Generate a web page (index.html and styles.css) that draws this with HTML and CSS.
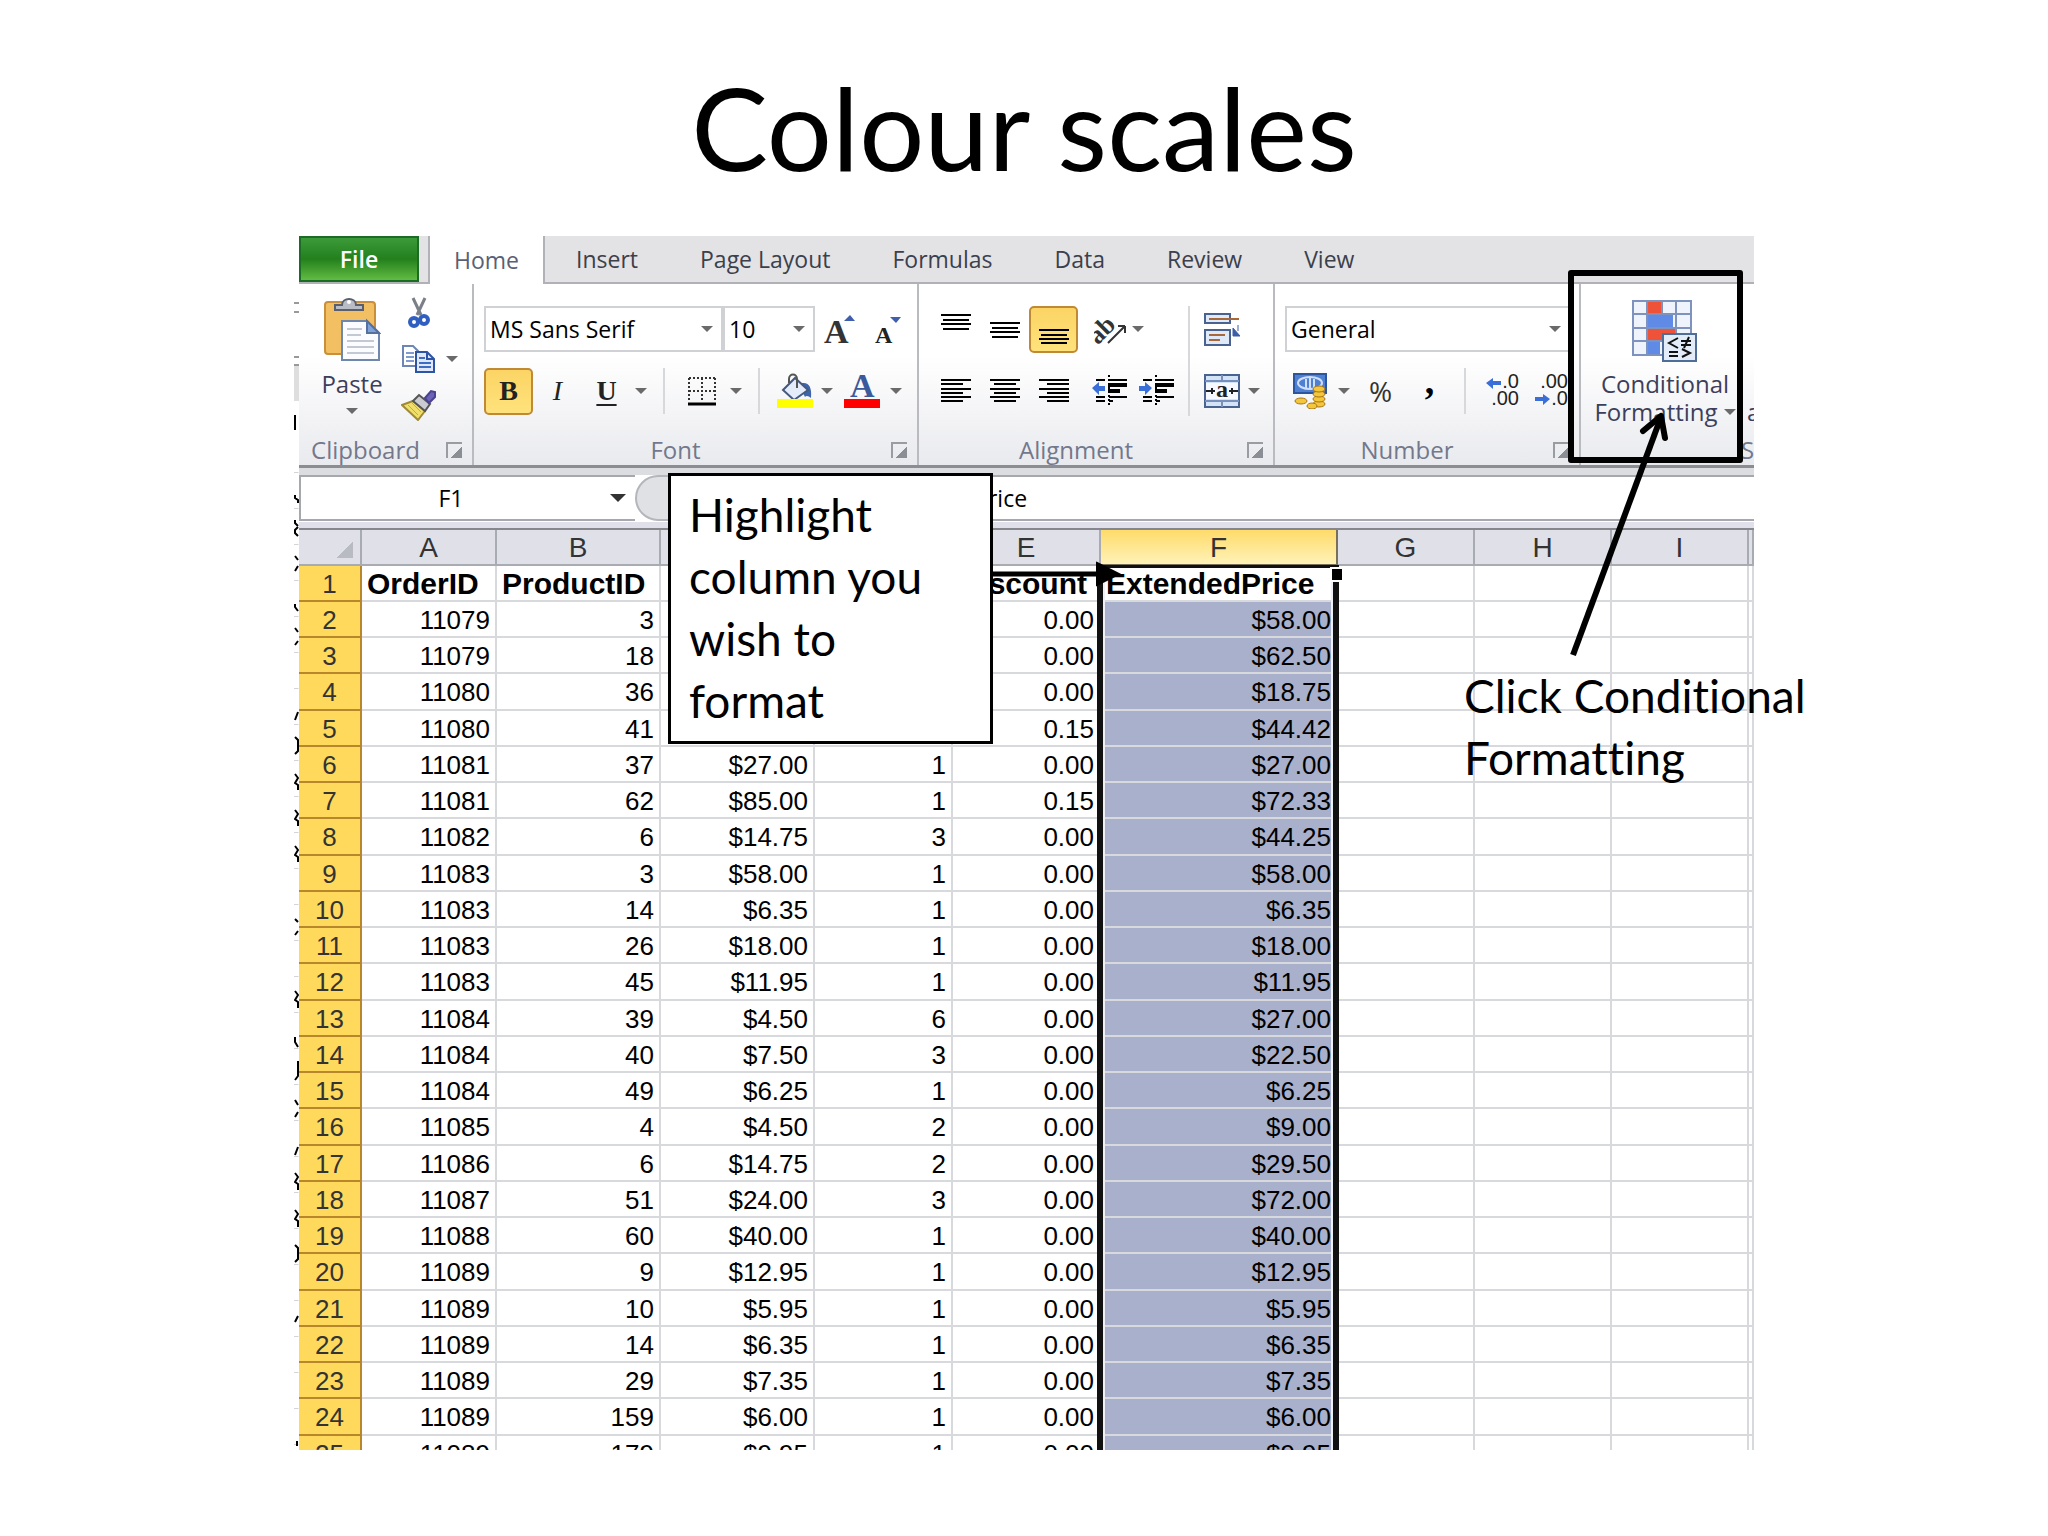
FILE: index.html
```html
<!DOCTYPE html>
<html lang="en">
<head>
    <meta charset="UTF-8">
    <meta name="viewport" content="width=device-width, initial-scale=1.0">
    <title>Colour scales</title>
    <link rel="stylesheet" href="styles.css">
</head>
<body>
    <h1>Colour scales</h1>

    <main class="workbook">
        <!-- sliver of the window behind -->
        <svg class="behind" width="5" height="1214" viewBox="0 0 5 1214">
            <path d="M0 128h5v37H0z" fill="#dedede"/>
            <path d="M0 67h5M0 76h5M0 121h5M0 129h5" stroke="#999" stroke-width="2"/>
            <path d="M2 0v978" transform="translate(0 236)" stroke="#d4d4d4" stroke-width="5" stroke-dasharray="1 35"/>
            <path d="M1 179v15" stroke="#000" stroke-width="2"/>
            <g fill="none" stroke="#000" stroke-width="2">
                <path d="M1 259v3l3 2v3M1 284v3l3 3M4 291l-3 3v3l3 3M1 320l3 4M4 330l-3 5M1 368v3l3 4M1 392l3 4M4 405l-3 4"/>
                <path d="M4 476l-3 8M1 501l3 3v11l-3 3M1 538l3 4-3 5 3 2v5M1 574l3 4-3 5 3 2v5M1 610l3 4-3 5 3 2v5"/>
                <path d="M1 683l3 3M4 695l-3 4M1 755l3 4-3 5 3 2v6M1 801v5l3 5M4 825v15l-3 4"/>
                <path d="M1 864l3 5M4 876l-3 5M4 911l-3 8M1 937l3 4-3 5 3 2v6M1 974l3 4-3 5 3 2v6M1 1009l3 3v11l-3 3M4 1080l-3 6M3 1205v5"/>
            </g>
        </svg>

        <div class="window">
            <nav class="tabs">
                <button class="tab file">File</button>
                <button class="tab home">Home</button>
                <button class="tab">Insert</button>
                <button class="tab">Page Layout</button>
                <button class="tab">Formulas</button>
                <button class="tab">Data</button>
                <button class="tab">Review</button>
                <button class="tab">View</button>
            </nav>

            <div class="ribbon">
                <section class="group clipboard">
                    <div class="group-body">
                        <button class="big paste">
                            <svg width="58" height="66" viewBox="0 0 58 66">
                                <rect x="2" y="6" width="50" height="52" rx="3" fill="#f3bf63" stroke="#c98f3a" stroke-width="2"/>
                                <path d="M12 14V9h7c0-8 14-8 14 0h7v5z" fill="#b9bcc4" stroke="#5a5f6b" stroke-width="2"/>
                                <circle cx="26" cy="6" r="2" fill="#fff"/>
                                <path d="M19 25h25l12 12v27H19z" fill="#fbfcff" stroke="#6f87ad" stroke-width="2"/>
                                <path d="M44 25v12h12z" fill="#7fa3d8" stroke="#54719f" stroke-width="2"/>
                                <path d="M24 33h15M24 39h14M24 45h27M24 51h27M24 57h27" stroke="#c3c8d2" stroke-width="2"/>
                            </svg>
                            <span>Paste</span>
                            <i class="caret"></i>
                        </button>
                        <div class="stack">
                            <button class="tool" aria-label="Cut">
                                <svg width="22" height="32" viewBox="0 0 22 32">
                                    <path d="M5 1l8 17M17 1L9 18" stroke="#7a7f88" stroke-width="3"/>
                                    <circle cx="6" cy="25" r="4" fill="none" stroke="#2f5fc0" stroke-width="4"/>
                                    <circle cx="16" cy="23" r="4" fill="none" stroke="#2f5fc0" stroke-width="4"/>
                                </svg>
                            </button>
                            <div class="split">
                                <button class="tool" aria-label="Copy">
                                    <svg width="34" height="28" viewBox="0 0 34 28">
                                        <path d="M1 1h10l5 5v15H1z" fill="#fff" stroke="#6d86b5" stroke-width="2"/>
                                        <path d="M4 8h8M4 12h8M4 16h8" stroke="#7f9ccf" stroke-width="2"/>
                                        <path d="M14 7h11l7 7v13H14z" fill="#dfe9fb" stroke="#2d54a5" stroke-width="2"/>
                                        <path d="M25 7v7h7" fill="none" stroke="#2d54a5" stroke-width="2"/>
                                        <path d="M17 13h6M17 18h12M17 22h12" stroke="#3e6dc4" stroke-width="2"/>
                                    </svg>
                                </button>
                                <button class="drop" aria-label="Copy options"><i class="caret"></i></button>
                            </div>
                            <button class="tool" aria-label="Format Painter">
                                <svg width="36" height="32" viewBox="0 0 36 32">
                                    <path d="M1 16l11-4 12 10-7 9z" fill="#f1df6b" stroke="#a08a35" stroke-width="2"/>
                                    <path d="M7 16l10 10M11 14l9 9" stroke="#c8ad3c" stroke-width="1"/>
                                    <path d="M12 12l6-6 11 9-5 7z" fill="#c9ccd2" stroke="#555" stroke-width="2"/>
                                    <path d="M24 9l6-7 4 1v5l-6 6z" fill="#6b63b8" stroke="#4a4391" stroke-width="2"/>
                                </svg>
                            </button>
                        </div>
                    </div>
                    <footer><span>Clipboard</span><button class="launcher" aria-label="Clipboard settings"></button></footer>
                </section>

                <section class="group font">
                    <div class="group-body rows">
                        <div class="row">
                            <select class="combo font-name" aria-label="Font"><option>MS Sans Serif</option></select>
                            <select class="combo font-size" aria-label="Font size"><option>10</option></select>
                            <button class="tool" aria-label="Increase font size">
                                <svg width="32" height="32" viewBox="0 0 32 32">
                                    <text x="0" y="30" class="letter big-a">A</text>
                                    <path d="M20 8h11l-5-6z" fill="#3f5fae"/>
                                </svg>
                            </button>
                            <button class="tool" aria-label="Decrease font size">
                                <svg width="32" height="32" viewBox="0 0 32 32">
                                    <text x="2" y="30" class="letter small-a">A</text>
                                    <path d="M17 4h11l-5 6z" fill="#3f5fae"/>
                                </svg>
                            </button>
                        </div>
                        <div class="row">
                            <button class="tool on bold">B</button>
                            <button class="tool italic">I</button>
                            <button class="tool underline">U</button>
                            <button class="drop" aria-label="Underline options"><i class="caret"></i></button>
                            <i class="sep"></i>
                            <button class="tool" aria-label="Borders">
                                <svg width="30" height="30" viewBox="0 0 30 30">
                                    <path d="M2 2h26M2 15h26M2 2v24M15 2v24M28 2v24" fill="none" stroke="#333" stroke-width="2" stroke-dasharray="2 2"/>
                                    <path d="M1 28h28" stroke="#000" stroke-width="3"/>
                                </svg>
                            </button>
                            <button class="drop" aria-label="Border options"><i class="caret"></i></button>
                            <i class="sep"></i>
                            <button class="tool narrow" aria-label="Fill colour">
                                <svg width="36" height="36" viewBox="0 0 36 36">
                                    <path d="M25 10c7-1 10 4 9 15-2-2-5-3-6-1l-4-8z" fill="#3e64ac"/>
                                    <path d="M6 17L18 5l13 12-14 10z" fill="#e4ecfa" stroke="#44597f" stroke-width="2"/>
                                    <path d="M12 10V6c0-6 8-6 8 0v9" fill="none" stroke="#555" stroke-width="2"/>
                                    <path d="M0 26h36v9H0z" fill="#ff0"/>
                                </svg>
                            </button>
                            <button class="drop" aria-label="Fill colour options"><i class="caret"></i></button>
                            <button class="tool" aria-label="Font colour">
                                <svg width="36" height="36" viewBox="0 0 36 36">
                                    <text x="6" y="24" class="letter blue-a">A</text>
                                    <path d="M0 26h36v9H0z" fill="#f00"/>
                                </svg>
                            </button>
                            <button class="drop" aria-label="Font colour options"><i class="caret"></i></button>
                        </div>
                    </div>
                    <footer><span>Font</span><button class="launcher" aria-label="Font settings"></button></footer>
                </section>

                <section class="group alignment">
                    <div class="group-body">
                        <div class="rows">
                            <div class="row">
                                <button class="tool" aria-label="Top align">
                                    <svg width="32" height="32" viewBox="0 0 32 32"><path d="M1 2h30M3 7h26M1 11h30M3 16h26" stroke="#000" stroke-width="2"/></svg>
                                </button>
                                <button class="tool" aria-label="Middle align">
                                    <svg width="32" height="32" viewBox="0 0 32 32"><path d="M1 10h30M3 15h26M1 19h30M3 24h26" stroke="#000" stroke-width="2"/></svg>
                                </button>
                                <button class="tool on" aria-label="Bottom align">
                                    <svg width="32" height="32" viewBox="0 0 32 32"><path d="M1 17h30M3 22h26M1 26h30M3 30h26" stroke="#000" stroke-width="2"/></svg>
                                </button>
                                <button class="tool orientation" aria-label="Orientation">
                                    <svg width="34" height="34" viewBox="0 0 34 34">
                                        <text x="-4" y="25" class="letter ab" transform="rotate(-45 10 20)">ab</text>
                                        <path d="M14 31l17-17M31 14h-7M31 14v7" fill="none" stroke="#333" stroke-width="2"/>
                                    </svg>
                                </button>
                                <button class="drop" aria-label="Orientation options"><i class="caret"></i></button>
                            </div>
                            <div class="row">
                                <button class="tool" aria-label="Align left">
                                    <svg width="32" height="32" viewBox="0 0 32 32"><path d="M1 5h30M1 9h22M1 14h30M1 18h22M1 22h30M1 26h22" stroke="#000" stroke-width="2"/></svg>
                                </button>
                                <button class="tool" aria-label="Centre">
                                    <svg width="32" height="32" viewBox="0 0 32 32"><path d="M1 5h30M5 9h22M1 14h30M5 18h22M1 22h30M5 26h22" stroke="#000" stroke-width="2"/></svg>
                                </button>
                                <button class="tool" aria-label="Align right">
                                    <svg width="32" height="32" viewBox="0 0 32 32"><path d="M1 5h30M9 9h22M1 14h30M9 18h22M1 22h30M9 26h22" stroke="#000" stroke-width="2"/></svg>
                                </button>
                                <div class="split indents">
                                    <button class="tool" aria-label="Decrease indent">
                                        <svg width="36" height="34" viewBox="0 0 36 34">
                                            <path d="M4 6h9M4 23h9M4 27h9M17 6h18M17 23h18M17 27h4" stroke="#000" stroke-width="2"/>
                                            <path d="M16 11h19M16 17h12" stroke="#000" stroke-width="4"/>
                                            <path d="M17 1v32" stroke="#000" stroke-width="2" stroke-dasharray="2 2"/>
                                            <path d="M0 14l7-6v4h6v5H7v4z" fill="#3a6fd8"/>
                                        </svg>
                                    </button>
                                    <button class="tool" aria-label="Increase indent">
                                        <svg width="36" height="34" viewBox="0 0 36 34">
                                            <path d="M4 6h9M4 23h9M4 27h9M17 6h18M17 23h18M17 27h4" stroke="#000" stroke-width="2"/>
                                            <path d="M16 11h19M16 17h12" stroke="#000" stroke-width="4"/>
                                            <path d="M17 1v32" stroke="#000" stroke-width="2" stroke-dasharray="2 2"/>
                                            <path d="M13 14L6 8v4H0v5h6v4z" fill="#3a6fd8"/>
                                        </svg>
                                    </button>
                                </div>
                            </div>
                        </div>
                        <i class="sep tall"></i>
                        <div class="rows">
                            <div class="row">
                                <button class="tool narrow" aria-label="Wrap text">
                                    <svg width="36" height="34" viewBox="0 0 36 34">
                                        <path d="M1 2h25v9H1zM1 18h25v15H1z" fill="#dfe9f8" stroke="#4a628f" stroke-width="2"/>
                                        <path d="M5 7h30M5 23h16M5 28h11" stroke="#a8683a" stroke-width="2"/>
                                        <path d="M34 13v6M29 24v-8l7 8z" fill="#3c5ea8" stroke="#3c5ea8" stroke-width="1"/>
                                    </svg>
                                </button>
                            </div>
                            <div class="row">
                                <button class="tool narrow" aria-label="Merge and centre">
                                    <svg width="36" height="34" viewBox="0 0 36 34">
                                        <path d="M1 1h34v32H1z" fill="#d4e2f6" stroke="#4a628f" stroke-width="2"/>
                                        <path d="M1 7h34M1 27h34M18 1v6M18 27v6" stroke="#7690bb" stroke-width="2"/>
                                        <path d="M2 9h32v16H2z" fill="#f6f9ff"/>
                                        <path d="M2 17h9M8 14v6M34 17h-9M28 14v6" stroke="#222" stroke-width="2"/>
                                        <text x="12" y="23" class="letter merge-a">a</text>
                                    </svg>
                                </button>
                                <button class="drop" aria-label="Merge options"><i class="caret"></i></button>
                            </div>
                        </div>
                    </div>
                    <footer><span>Alignment</span><button class="launcher" aria-label="Alignment settings"></button></footer>
                </section>

                <section class="group number">
                    <div class="group-body rows">
                        <div class="row">
                            <select class="combo number-format" aria-label="Number format"><option>General</option></select>
                        </div>
                        <div class="row">
                            <button class="tool" aria-label="Accounting format">
                                <svg width="34" height="36" viewBox="0 0 34 36">
                                    <path d="M1 1h32v19H1z" fill="#4f7fd0" stroke="#2c559f" stroke-width="2"/>
                                    <ellipse cx="17" cy="10" rx="12" ry="6" fill="none" stroke="#cfdff7" stroke-width="2"/>
                                    <path d="M13 6v9M17 5v10M21 6v9" stroke="#cfdff7" stroke-width="2"/>
                                    <g fill="#f4c63c" stroke="#a87512" stroke-width="1">
                                        <ellipse cx="26" cy="31" rx="6" ry="3"/>
                                        <ellipse cx="26" cy="26" rx="6" ry="3"/>
                                        <ellipse cx="26" cy="21" rx="6" ry="3"/>
                                        <ellipse cx="26" cy="16" rx="6" ry="3"/>
                                        <ellipse cx="8" cy="28" rx="6" ry="3"/>
                                        <ellipse cx="19" cy="33" rx="5" ry="3"/>
                                    </g>
                                </svg>
                            </button>
                            <button class="drop" aria-label="Accounting options"><i class="caret"></i></button>
                            <button class="tool percent">%</button>
                            <button class="tool narrow comma">,</button>
                            <i class="sep"></i>
                            <button class="tool" aria-label="Increase decimal">
                                <svg width="34" height="34" viewBox="0 0 34 34">
                                    <text x="33" y="14" class="dec">.0</text>
                                    <text x="33" y="31" class="dec">.00</text>
                                    <path d="M0 9l7-5v3h8v4H7v4z" fill="#3a6fd8"/>
                                </svg>
                            </button>
                            <button class="tool" aria-label="Decrease decimal">
                                <svg width="34" height="34" viewBox="0 0 34 34">
                                    <text x="33" y="14" class="dec">.00</text>
                                    <text x="33" y="31" class="dec">.0</text>
                                    <path d="M15 25l-7-5v3H0v4h8v4z" fill="#3a6fd8"/>
                                </svg>
                            </button>
                        </div>
                    </div>
                    <footer><span>Number</span><button class="launcher" aria-label="Number settings"></button></footer>
                </section>

                <section class="group styles">
                    <div class="group-body">
                        <button class="big conditional">
                            <svg width="66" height="66" viewBox="0 -4 66 66">
                                <path d="M1 1h58v54H1z" fill="#eef3fc"/>
                                <path d="M16 1h14v13H16zM16 28h27v13H16z" fill="#ee5238"/>
                                <path d="M16 14h25v14H16zM16 41h12v14H16z" fill="#5f8ae6"/>
                                <path d="M1 1h58v54H1zM1 14h58M1 28h58M1 41h58M15 1v54M30 1v13M44 1v54" fill="none" stroke="#7d93bd" stroke-width="2"/>
                                <path d="M31 34h33v27H31z" fill="#e3edf9" stroke="#4f6d99" stroke-width="2"/>
                                <path d="M46 38l-9 5 9 5M37 52h9M37 56h9M49 41h10M49 45h10M57 37l-5 11M50 49l8 4-8 4" fill="none" stroke="#111" stroke-width="2"/>
                            </svg>
                            <span>Conditional</span>
                            <span class="with-caret">Formatting <i class="caret"></i></span>
                        </button>
                        <button class="big as-table">a</button>
                    </div>
                    <footer><span>St</span></footer>
                </section>
            </div>

            <div class="formula-bar">
                <input class="name-box" value="F1" aria-label="Name box">
                <button class="drop" aria-label="Names"><i class="caret dark"></i></button>
                <i class="pill"></i>
                <input class="formula" value="ExtendedPrice" aria-label="Formula">
            </div>

            <div class="sheet">
                <table>
                    <colgroup>
                        <col class="c-head"><col class="c-a"><col class="c-b"><col class="c-c"><col class="c-d"><col class="c-e">
                        <col class="c-f"><col class="c-g"><col class="c-g"><col class="c-g"><col>
                    </colgroup>
                    <thead>
                        <tr>
                            <th class="corner"></th><th>A</th><th>B</th><th></th><th></th><th>E</th>
                            <th class="picked">F</th><th>G</th><th>H</th><th>I</th><th></th>
                        </tr>
                    </thead>
                    <tbody id="rows"></tbody>
                </table>
                <div class="marquee"></div>
                <i class="handle"></i>
            </div>
        </div>

        <i class="frame"></i>
        <p class="note boxed">Highlight column you wish to format</p>
        <p class="note click">Click Conditional Formatting</p>
        <svg class="arrows" width="1460" height="500" viewBox="0 0 1460 500">
            <g fill="none" stroke="#000">
                <path d="M698 338h118" stroke-width="5"/>
                <path d="M803 327l22 11-22 11z" fill="#000" stroke-width="2"/>
                <path d="M1279 419l88-238" stroke-width="6"/>
                <path d="M1349 195l18-15 4 22" stroke-width="6" stroke-linecap="round" stroke-linejoin="round"/>
            </g>
        </svg>
    </main>

    <script>
        const rows = [
            ['OrderID', 'ProductID', '', '', 'Discount', 'ExtendedPrice'],
            [11079, 3, '', '', '0.00', '$58.00'],
            [11079, 18, '', '', '0.00', '$62.50'],
            [11080, 36, '', '', '0.00', '$18.75'],
            [11080, 41, '', '', '0.15', '$44.42'],
            [11081, 37, '$27.00', 1, '0.00', '$27.00'],
            [11081, 62, '$85.00', 1, '0.15', '$72.33'],
            [11082, 6, '$14.75', 3, '0.00', '$44.25'],
            [11083, 3, '$58.00', 1, '0.00', '$58.00'],
            [11083, 14, '$6.35', 1, '0.00', '$6.35'],
            [11083, 26, '$18.00', 1, '0.00', '$18.00'],
            [11083, 45, '$11.95', 1, '0.00', '$11.95'],
            [11084, 39, '$4.50', 6, '0.00', '$27.00'],
            [11084, 40, '$7.50', 3, '0.00', '$22.50'],
            [11084, 49, '$6.25', 1, '0.00', '$6.25'],
            [11085, 4, '$4.50', 2, '0.00', '$9.00'],
            [11086, 6, '$14.75', 2, '0.00', '$29.50'],
            [11087, 51, '$24.00', 3, '0.00', '$72.00'],
            [11088, 60, '$40.00', 1, '0.00', '$40.00'],
            [11089, 9, '$12.95', 1, '0.00', '$12.95'],
            [11089, 10, '$5.95', 1, '0.00', '$5.95'],
            [11089, 14, '$6.35', 1, '0.00', '$6.35'],
            [11089, 29, '$7.35', 1, '0.00', '$7.35'],
            [11089, 159, '$6.00', 1, '0.00', '$6.00'],
            [11089, 179, '$9.95', 1, '0.00', '$9.95']
        ];

        const body = document.getElementById('rows');
        rows.forEach((row, index) => {
            const tr = document.createElement('tr');
            const head = document.createElement('th');
            head.textContent = index + 1;
            tr.appendChild(head);
            for (let i = 0; i < 10; i++) {
                const td = document.createElement('td');
                td.textContent = i < row.length ? row[i] : '';
                tr.appendChild(td);
            }
            body.appendChild(tr);
        });
    </script>
</body>
</html>
```

FILE: styles.css
```css
* {
    box-sizing: border-box;
}

body {
    margin: 0;
    background-color: #fff;
    color: #000;
    font-family: "Open Sans", "Noto Sans", sans-serif;
}

h1 {
    margin: 0;
    height: 236px;
    padding-top: 58px;
    font-family: Lato, sans-serif;
    font-size: 115px;
    font-weight: 400;
    line-height: 136px;
    text-align: center;
}

button,
input,
select {
    margin: 0;
    padding: 0;
    border: none;
    background: none;
    color: inherit;
    font: inherit;
}

.workbook {
    position: relative;
    display: flex;
    margin: 0 294px;
}

.behind {
    flex: none;
}

.window {
    flex: 1;
    min-width: 0;
    font-size: 23px;
}

/* Tabs */
.tabs {
    display: flex;
    height: 48px;
    background-color: #e3e3e5;
    border-bottom: 2px solid #b0b2b7;
}

.tab {
    height: 46px;
    padding: 0 31px;
    color: #3c3f4c;
}

.tab.file {
    width: 120px;
    margin-right: 9px;
    border: 2px solid #1c6b27;
    background: linear-gradient(#3c9a3a, #23801d 50%, #62bb42);
    color: #fff;
    font-weight: 600;
}

.tab.home {
    height: 48px;
    width: 117px;
    padding: 0;
    border-left: 2px solid #b0b2b7;
    border-right: 2px solid #b0b2b7;
    background-color: #fff;
    color: #5b5f73;
}

/* Ribbon */
.ribbon {
    display: flex;
    height: 184px;
    overflow: hidden;
    background: linear-gradient(#fff 40%, #e9eaee);
    border-bottom: 3px solid #8b8d92;
}

.group {
    flex: none;
    display: flex;
    flex-direction: column;
    border-right: 2px solid #b9bbc1;
}

.clipboard {
    width: 175px;
}

.font {
    width: 445px;
}

.alignment {
    width: 356px;
}

.number {
    width: 306px;
}

.styles {
    flex: 1;
    min-width: 0;
    border-right: none;
}

.group-body {
    display: flex;
    flex: 1;
    padding: 22px 0 0 10px;
}

.alignment .group-body {
    padding-left: 12px;
}

.rows {
    display: flex;
    flex-direction: column;
    gap: 16px;
}

.row,
.split {
    display: flex;
    align-items: center;
}

.row {
    height: 46px;
}

.group footer {
    display: flex;
    align-items: center;
    height: 30px;
    padding-right: 10px;
    color: #73788c;
    font-size: 24px;
    line-height: 30px;
}

.group footer span {
    flex: 1;
    padding-right: 14px;
    text-align: center;
}

.launcher {
    width: 16px;
    height: 16px;
    border-top: 2px solid #9a9ca3;
    border-left: 2px solid #9a9ca3;
    background: linear-gradient(135deg, transparent 60%, #8c8e95 60%);
}

.tool {
    flex: none;
    display: flex;
    align-items: center;
    justify-content: center;
    width: 49px;
    height: 47px;
}

.tool.narrow {
    width: 45px;
}

.tool.on {
    border: 2px solid #c08a35;
    border-radius: 5px;
    background: linear-gradient(#fbd465, #ffe27c);
}

.tool svg {
    display: block;
}

.tool.orientation {
    width: 34px;
    margin-left: 16px;
}

.indents {
    margin-left: 8px;
}

.indents .tool {
    width: 47px;
}

.drop {
    flex: none;
    width: 20px;
    height: 46px;
    display: flex;
    align-items: center;
    justify-content: center;
}

.caret {
    flex: none;
    display: inline-block;
    border: 6px solid transparent;
    border-top-color: #6a6a6a;
    border-bottom: none;
}

.caret.dark {
    border-width: 8px;
    border-bottom: none;
    border-top-color: #333;
}

.sep {
    flex: none;
    width: 2px;
    height: 46px;
    margin: 0 12px;
    background-color: #d6d8dc;
}

.sep.tall {
    height: 110px;
    margin: 0 9px 0 8px;
}

.combo {
    height: 46px;
    padding-left: 4px;
    border: 2px solid #cfd1d5;
    border-radius: 0;
    appearance: none;
    background: #fff url("data:image/svg+xml,%3Csvg xmlns='http://www.w3.org/2000/svg' width='12' height='6'%3E%3Cpath d='M0 0h12l-6 6z' fill='%236a6a6a'/%3E%3C/svg%3E") no-repeat right 8px center;
}

.font-name {
    width: 239px;
}

.font-size {
    width: 92px;
}

.number-format {
    width: 286px;
}

.bold,
.italic,
.underline,
.letter {
    font-family: "Liberation Serif", serif;
    font-weight: 700;
}

.bold,
.italic,
.underline {
    font-size: 28px;
    color: #222;
}

.italic {
    font-style: italic;
    font-weight: 400;
}

.underline {
    text-decoration: underline;
    text-underline-offset: 4px;
}

.big-a {
    font-size: 34px;
    fill: #333;
}

.small-a {
    font-size: 24px;
    fill: #222;
}

.blue-a {
    font-size: 34px;
    fill: #3a5a9c;
}

.ab {
    font-size: 26px;
    fill: #333;
}

.merge-a {
    font-size: 24px;
    fill: #222;
}

.dec {
    font-family: "Liberation Sans", sans-serif;
    font-size: 20px;
    text-anchor: end;
    fill: #222;
}

.percent {
    width: 53px;
    font-size: 28px;
    color: #333;
}

.comma {
    font-family: "Liberation Serif", serif;
    font-size: 38px;
    font-weight: 700;
    line-height: 20px;
    padding-bottom: 20px;
}

.big {
    flex: none;
    display: flex;
    flex-direction: column;
    align-items: center;
    justify-content: flex-start;
    padding-top: 6px;
    color: #3c3f5c;
    font-size: 24px;
    line-height: 28px;
}

.big svg {
    margin-bottom: 8px;
}

.clipboard .group-body,
.styles .group-body {
    height: 151px;
    padding-top: 6px;
}

.paste {
    width: 86px;
}

.paste .caret {
    margin-top: 10px;
}

.stack {
    display: flex;
    flex-direction: column;
}

.stack .tool {
    width: 47px;
    height: 46px;
}

.conditional {
    width: 148px;
}

.with-caret {
    display: flex;
    align-items: center;
    gap: 6px;
}

.as-table {
    padding-top: 108px;
    padding-left: 8px;
}

.styles footer {
    overflow: hidden;
}

.group.styles footer span {
    padding: 0 0 0 160px;
    text-align: left;
}

/* Formula bar */
.formula-bar {
    display: flex;
    align-items: stretch;
    height: 62px;
    padding-bottom: 7px;
    border-top: 7px solid #dcdde1;
    border-bottom: 2px solid #85878d;
    background: linear-gradient(#fff 47px, #dfe0ea 47px);
}

.formula-bar > * {
    height: 46px;
    border-top: 2px solid #a6a8ad;
    border-bottom: 2px solid #a6a8ad;
}

.formula-bar .name-box {
    width: 302px;
    border-left: 2px solid #a6a8ad;
    text-align: center;
}

.formula-bar .drop {
    width: 34px;
}

.formula-bar .pill {
    width: 238px;
    border: 2px solid #b4b6bb;
    border-radius: 23px;
    background-color: #e0e1e5;
}

.formula {
    flex: 1;
    min-width: 0;
}

/* Sheet */
.sheet {
    position: relative;
    height: 920px;
    overflow: hidden;
    font-family: "Liberation Sans", Arial, sans-serif;
    font-size: 26px;
}

table {
    width: 100%;
    table-layout: fixed;
    border-collapse: separate;
    border-spacing: 0;
}

.c-head {
    width: 63px;
}

.c-a {
    width: 135px;
}

.c-b {
    width: 164px;
}

.c-c {
    width: 154px;
}

.c-d {
    width: 138px;
}

.c-e {
    width: 148px;
}

.c-f {
    width: 237px;
}

.c-g {
    width: 137px;
}

th,
td {
    height: 36px;
    padding: 1px 5px 0;
    border-right: 2px solid #d8d9dd;
    border-bottom: 2px solid #d8d9dd;
    line-height: 32px;
    white-space: nowrap;
    overflow: hidden;
}

/* keeps the row pitch in step with the zoomed grid */
tbody tr:nth-child(4n) > * {
    height: 37px;
}

td {
    text-align: right;
}

thead th {
    border-color: #a9abb2;
    background-color: #e0e1e8;
    color: #333;
    font-size: 28px;
    font-weight: 400;
}

thead .picked {
    background: linear-gradient(#ffdb6a, #fff3b8);
    border-color: #77705c;
}

.corner {
    background: linear-gradient(135deg, transparent 50%, #b9bbc2 50%) no-repeat 38px 12px / 16px 16px, #e0e1e8;
}

tbody th {
    border-color: #b8872c;
    background-color: #ffd95c;
    color: #333;
    font-weight: 400;
}

tbody tr:first-child td {
    font-size: 30px;
    font-weight: 700;
    text-align: left;
}

tbody tr:first-child td:nth-child(6) {
    text-align: right;
    padding-right: 12px;
}

tbody tr:not(:first-child) td:nth-child(7) {
    background-color: #a8b0cc;
}

.marquee {
    position: absolute;
    top: 35px;
    left: 798px;
    width: 242px;
    height: 900px;
    border: 6px solid #111;
    border-top-width: 3px;
    box-shadow: inset 2px 0 #eef0f6, inset -2px 0 #eef0f6;
}

.handle {
    position: absolute;
    top: 37px;
    left: 1031px;
    width: 14px;
    height: 15px;
    border: 2px solid #fff;
    background-color: #000;
}

/* Annotations */
.frame {
    position: absolute;
    top: 34px;
    left: 1274px;
    width: 175px;
    height: 193px;
    border: 6px solid #000;
    border-radius: 3px;
}

.note {
    position: absolute;
    margin: 0;
    font-family: Lato, sans-serif;
    font-size: 46px;
    font-variant-ligatures: none;
    line-height: 62px;
}

.boxed {
    top: 237px;
    left: 374px;
    width: 325px;
    padding: 8px 18px 9px;
    border: 3px solid #000;
    background-color: #fff;
}

.click {
    top: 429px;
    left: 1170px;
    width: 360px;
}

.arrows {
    position: absolute;
    top: 0;
    left: 0;
    overflow: visible;
}
```
